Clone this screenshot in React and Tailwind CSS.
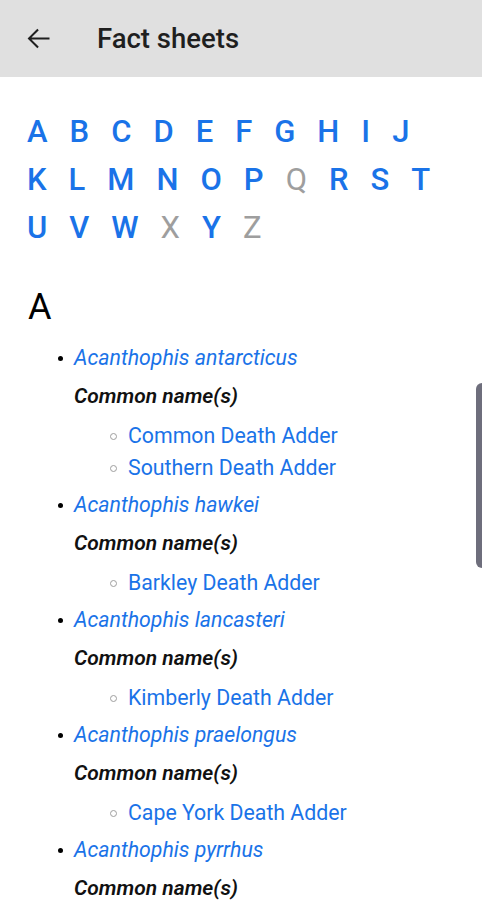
import React from "react";

const rows = [
  ["A", "B", "C", "D", "E", "F", "G", "H", "I", "J"],
  ["K", "L", "M", "N", "O", "P", "Q", "R", "S", "T"],
  ["U", "V", "W", "X", "Y", "Z"],
];
const disabled = ["Q", "X", "Z"];

const species = [
  { name: "Acanthophis antarcticus", common: ["Common Death Adder", "Southern Death Adder"] },
  { name: "Acanthophis hawkei", common: ["Barkley Death Adder"] },
  { name: "Acanthophis lancasteri", common: ["Kimberly Death Adder"] },
  { name: "Acanthophis praelongus", common: ["Cape York Death Adder"] },
  { name: "Acanthophis pyrrhus", common: ["Desert Death Adder"] },
];

export default function App() {
  return (
    <div className="relative h-[900px] w-[482px] overflow-hidden bg-white font-['Roboto','Noto_Sans',sans-serif]">
      {/* top bar */}
      <div className="flex h-[77px] items-center bg-[#e0e0e0]">
        <div className="ml-[22px] flex h-[33px] w-[33px] items-center justify-center">
          <svg width="33" height="33" viewBox="0 0 24 24" fill="#1f1f1f">
            <path d="M20 11.25H6.9l5.3-5.3-1.05-1.05L4.05 12l7.1 7.1 1.05-1.05-5.3-5.3H20z" />
          </svg>
        </div>
        <div className="ml-[42px] text-[27.5px] font-medium text-[#1f1f1f]">Fact sheets</div>
      </div>

      {/* alphabet */}
      <div className="px-[27px] pt-[31px]">
        {rows.map((row, i) => (
          <div key={i} className="flex h-[48px] items-center gap-x-[22px] text-[31px] font-medium leading-[48px]">
            {row.map((l) => (
              <span key={l} className={disabled.includes(l) ? "font-normal text-[#9e9e9e]" : "text-[#1a73e8]"}>
                {l}
              </span>
            ))}
          </div>
        ))}
      </div>

      {/* section */}
      <div className="px-[28px] pt-[35px]">
        <div className="text-[36px] leading-[40px] text-black">A</div>
        <ul className="mt-[15px]">
          {species.map((s, i) => (
            <li key={s.name} className={i === 0 ? "" : "mt-[5px]"}>
              <div className="flex h-[32px] items-center">
                <span className="ml-[30px] h-[5px] w-[5px] rounded-full bg-black" />
                <span className="ml-[11px] text-[21.3px] italic text-[#1a73e8]">{s.name}</span>
              </div>
              <div className="my-[7px] flex h-[32px] items-center pl-[46px] text-[21px] font-semibold italic text-[#111]">
                Common name(s)
              </div>
              <ul>
                {s.common.map((c) => (
                  <li key={c} className="flex h-[32px] items-center">
                    <span className="ml-[82px] h-[7px] w-[7px] rounded-full border border-[#9e9e9e]" />
                    <span className="ml-[11px] text-[21.3px] text-[#1a73e8]">{c}</span>
                  </li>
                ))}
              </ul>
            </li>
          ))}
        </ul>
      </div>

      {/* scrollbar thumb */}
      <div className="absolute right-0 top-[383px] h-[185px] w-[6px] rounded-l-full bg-[#6e6e7c]" />
    </div>
  );
}
